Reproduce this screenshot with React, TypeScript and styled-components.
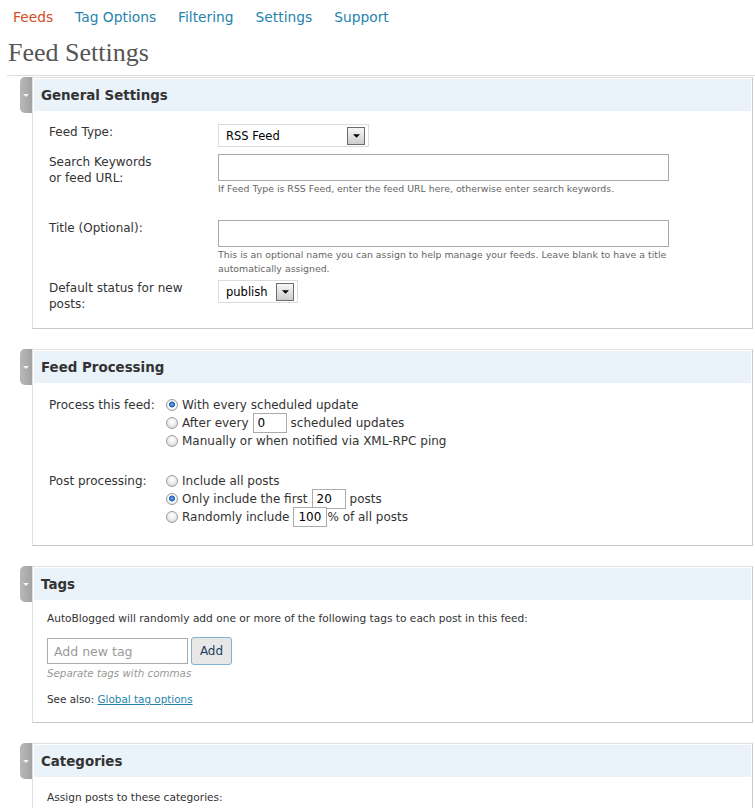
import React from "react";
import styled, { createGlobalStyle } from "styled-components";

const GlobalStyle = createGlobalStyle`
  body {
    margin: 0;
    background: #fff;
    font-family: "DejaVu Sans", Verdana, sans-serif;
    color: #333;
  }
  * { box-sizing: border-box; }
`;

//nav + title
const NavBar = styled.nav`
  display: flex;
  gap: 22px;
  padding: 8px 0 0 13px;
  font-size: 13.8px;
  line-height: 18px;
`;
const NavLink = styled.a<{ $active?: boolean }>`
  color: ${(p) => (p.$active ? "#d54e21" : "#2583ad")};
  text-decoration: none;
`;
const PageTitle = styled.h2`
  margin: 12px 0 0 7px;
  padding: 0 0 7px 1px;
  font-family: "Liberation Serif", Georgia, serif;
  font-weight: normal;
  font-size: 26px;
  line-height: 30px;
  color: #555;
  border-bottom: 1px solid #dedede;
`;

//postbox
const Boxes = styled.div`
  padding: 1px 2px 0 20px;
`;
const PostBoxWrapper = styled.div`
  display: flex;
  margin-bottom: 20px;
`;
const Handle = styled.div`
  flex: none;
  width: 12px;
  height: 36px;
  border-radius: 5px 0 0 5px;
  background: linear-gradient(to right, #b8b8b8, #a2a2a2);
  display: flex;
  align-items: center;
  justify-content: center;
`;
const Box = styled.div`
  flex: 1;
  border: 1px solid #e0e0e0;
  border-right-color: #c8c8c8;
  border-bottom-color: #c8c8c8;
  padding: 1px;
`;
const BoxHeader = styled.h3`
  margin: 0;
  height: 32px;
  padding-left: 7px;
  display: flex;
  align-items: center;
  background: #eaf2fa;
  font-size: 13.4px;
  font-weight: bold;
  color: #333;
`;
const BoxBody = styled.div<{ $pad: string }>`
  padding: ${(p) => p.$pad};
`;

//general settings form
const FormRow = styled.div<{ $top: number }>`
  display: grid;
  grid-template-columns: 169px 1fr;
  margin-top: ${(p) => p.$top}px;
`;
const FieldLabel = styled.div`
  font-size: 12px;
  line-height: 16px;
  color: #333;
`;
const SelectBox = styled.div<{ $width: number }>`
  width: ${(p) => p.$width}px;
  height: 23px;
  display: flex;
  align-items: center;
  justify-content: space-between;
  padding: 0 3px 0 7px;
  border: 1px solid #dcdcdc;
  background: #fff;
  font-size: 11.5px;
  color: #000;
`;
const SelectArrow = styled.span`
  width: 18px;
  height: 18px;
  border: 1px solid #6d6d6d;
  background: linear-gradient(#f6f6f6, #cdcdcd);
  display: flex;
  align-items: center;
  justify-content: center;
`;
const TextInput = styled.input`
  display: block;
  width: 451px;
  height: 27px;
  border: 1px solid #a8a8a8;
  font-family: inherit;
  font-size: 12px;
  padding: 0 6px;
  outline: none;
`;
const Description = styled.div`
  margin-top: 1px;
  max-width: 470px;
  font-size: 9.4px;
  line-height: 14px;
  color: #666;
`;

//feed processing
const RadioGroup = styled.div<{ $top: number }>`
  display: grid;
  grid-template-columns: 117px 1fr;
  margin-top: ${(p) => p.$top}px;
  font-size: 12px;
`;
const GroupLabel = styled.div`
  line-height: 18px;
`;
const Options = styled.div`
  display: flex;
  flex-direction: column;
`;
const Option = styled.label`
  display: flex;
  align-items: center;
  height: 18px;
  white-space: pre;
`;
const Radio = styled.span<{ $checked?: boolean }>`
  flex: none;
  width: 12px;
  height: 12px;
  margin-right: 4px;
  border-radius: 50%;
  border: 1px solid #9c9c9c;
  background: ${(p) =>
    p.$checked
      ? "radial-gradient(circle at 50% 45%, #6fb2f5 0, #1f5fb8 2.6px, #fdfdfd 3.4px, #d8d8d8 100%)"
      : "radial-gradient(circle at 50% 35%, #ffffff 0, #f1f1f1 40%, #cfcfcf 100%)"};
`;
const NumberInput = styled.input<{ $gapRight: number }>`
  width: 34px;
  height: 20px;
  margin: 0 ${(p) => p.$gapRight}px 0 4px;
  border: 1px solid #ababab;
  padding: 0 4px;
  font-family: inherit;
  font-size: 12px;
  color: #000;
  outline: none;
`;

//tags
const SmallText = styled.div`
  font-size: 10.6px;
  line-height: 14px;
  color: #333;
`;
const TagRow = styled.div`
  display: flex;
  align-items: center;
  gap: 3px;
  margin-top: 12px;
`;
const TagInput = styled.input`
  width: 141px;
  height: 26px;
  border: 1px solid #ababab;
  padding: 0 6px;
  font-family: inherit;
  font-size: 12.5px;
  outline: none;
  &::placeholder {
    color: #9a9a9a;
  }
`;
const AddButton = styled.button`
  width: 41px;
  height: 28px;
  border: 1px solid #80b3d2;
  border-radius: 3px;
  background: #e7e7e7;
  font-family: inherit;
  font-size: 12px;
  color: #22405e;
  padding: 0;
`;
const Hint = styled.div`
  margin-top: 1px;
  font-size: 10.3px;
  line-height: 14px;
  font-style: italic;
  color: #999;
`;
const SeeAlso = styled(SmallText)`
  margin-top: 12px;
  font-size: 10.4px;
  a {
    color: #2583ad;
    text-decoration: underline;
  }
`;

const DownTriangle = ({ color, w, h }: { color: string; w: number; h: number }) => (
  <svg width={w} height={h} viewBox="0 0 8 4">
    <path d="M0 0 H8 L4 4 Z" fill={color} />
  </svg>
);

const PostBox = ({ title, children, pad }: { title: string; children: React.ReactNode; pad: string }) => (
  <PostBoxWrapper>
    <Handle>
      <DownTriangle color="#f2f2f2" w={6} h={3} />
    </Handle>
    <Box>
      <BoxHeader>{title}</BoxHeader>
      <BoxBody $pad={pad}>{children}</BoxBody>
    </Box>
  </PostBoxWrapper>
);

const FakeSelect = ({ value, width }: { value: string; width: number }) => (
  <SelectBox $width={width}>
    <span>{value}</span>
    <SelectArrow>
      <DownTriangle color="#000" w={7} h={4} />
    </SelectArrow>
  </SelectBox>
);

const App = () => {
  return (
    <>
      <GlobalStyle />
      <NavBar>
        <NavLink $active href="#">Feeds</NavLink>
        <NavLink href="#">Tag Options</NavLink>
        <NavLink href="#">Filtering</NavLink>
        <NavLink href="#">Settings</NavLink>
        <NavLink href="#">Support</NavLink>
      </NavBar>
      <PageTitle>Feed Settings</PageTitle>
      <Boxes>
        <PostBox title="General Settings" pad="13px 16px 15px 15px">
          <FormRow $top={0}>
            <FieldLabel>Feed Type:</FieldLabel>
            <FakeSelect value="RSS Feed" width={151} />
          </FormRow>
          <FormRow $top={7}>
            <FieldLabel>
              Search Keywords
              <br />
              or feed URL:
            </FieldLabel>
            <div>
              <TextInput />
              <Description>
                If Feed Type is RSS Feed, enter the feed URL here, otherwise enter search keywords.
              </Description>
            </div>
          </FormRow>
          <FormRow $top={24}>
            <FieldLabel>Title (Optional):</FieldLabel>
            <div>
              <TextInput />
              <Description>
                This is an optional name you can assign to help manage your feeds. Leave blank to have a title
                automatically assigned.
              </Description>
            </div>
          </FormRow>
          <FormRow $top={4}>
            <FieldLabel>
              Default status for new
              <br />
              posts:
            </FieldLabel>
            <div>
              <FakeSelect value="publish" width={80} />
            </div>
          </FormRow>
        </PostBox>

        <PostBox title="Feed Processing" pad="13px 16px 18px 15px">
          <RadioGroup $top={0}>
            <GroupLabel>Process this feed:</GroupLabel>
            <Options>
              <Option>
                <Radio $checked />
                With every scheduled update
              </Option>
              <Option>
                <Radio />
                After every
                <NumberInput defaultValue="0" $gapRight={4} />
                scheduled updates
              </Option>
              <Option>
                <Radio />
                Manually or when notified via XML-RPC ping
              </Option>
            </Options>
          </RadioGroup>
          <RadioGroup $top={22}>
            <GroupLabel>Post processing:</GroupLabel>
            <Options>
              <Option>
                <Radio />
                Include all posts
              </Option>
              <Option>
                <Radio $checked />
                Only include the first
                <NumberInput defaultValue="20" $gapRight={4} />
                posts
              </Option>
              <Option>
                <Radio />
                Randomly include
                <NumberInput defaultValue="100" $gapRight={0} />% of all posts
              </Option>
            </Options>
          </RadioGroup>
        </PostBox>

        <PostBox title="Tags" pad="11px 14px 15px 13px">
          <SmallText>
            AutoBlogged will randomly add one or more of the following tags to each post in this feed:
          </SmallText>
          <TagRow>
            <TagInput placeholder="Add new tag" />
            <AddButton>Add</AddButton>
          </TagRow>
          <Hint>Separate tags with commas</Hint>
          <SeeAlso>
            See also: <a href="#">Global tag options</a>
          </SeeAlso>
        </PostBox>

        <PostBox title="Categories" pad="13px 14px 40px 13px">
          <SmallText>Assign posts to these categories:</SmallText>
        </PostBox>
      </Boxes>
    </>
  );
};

export default App;
